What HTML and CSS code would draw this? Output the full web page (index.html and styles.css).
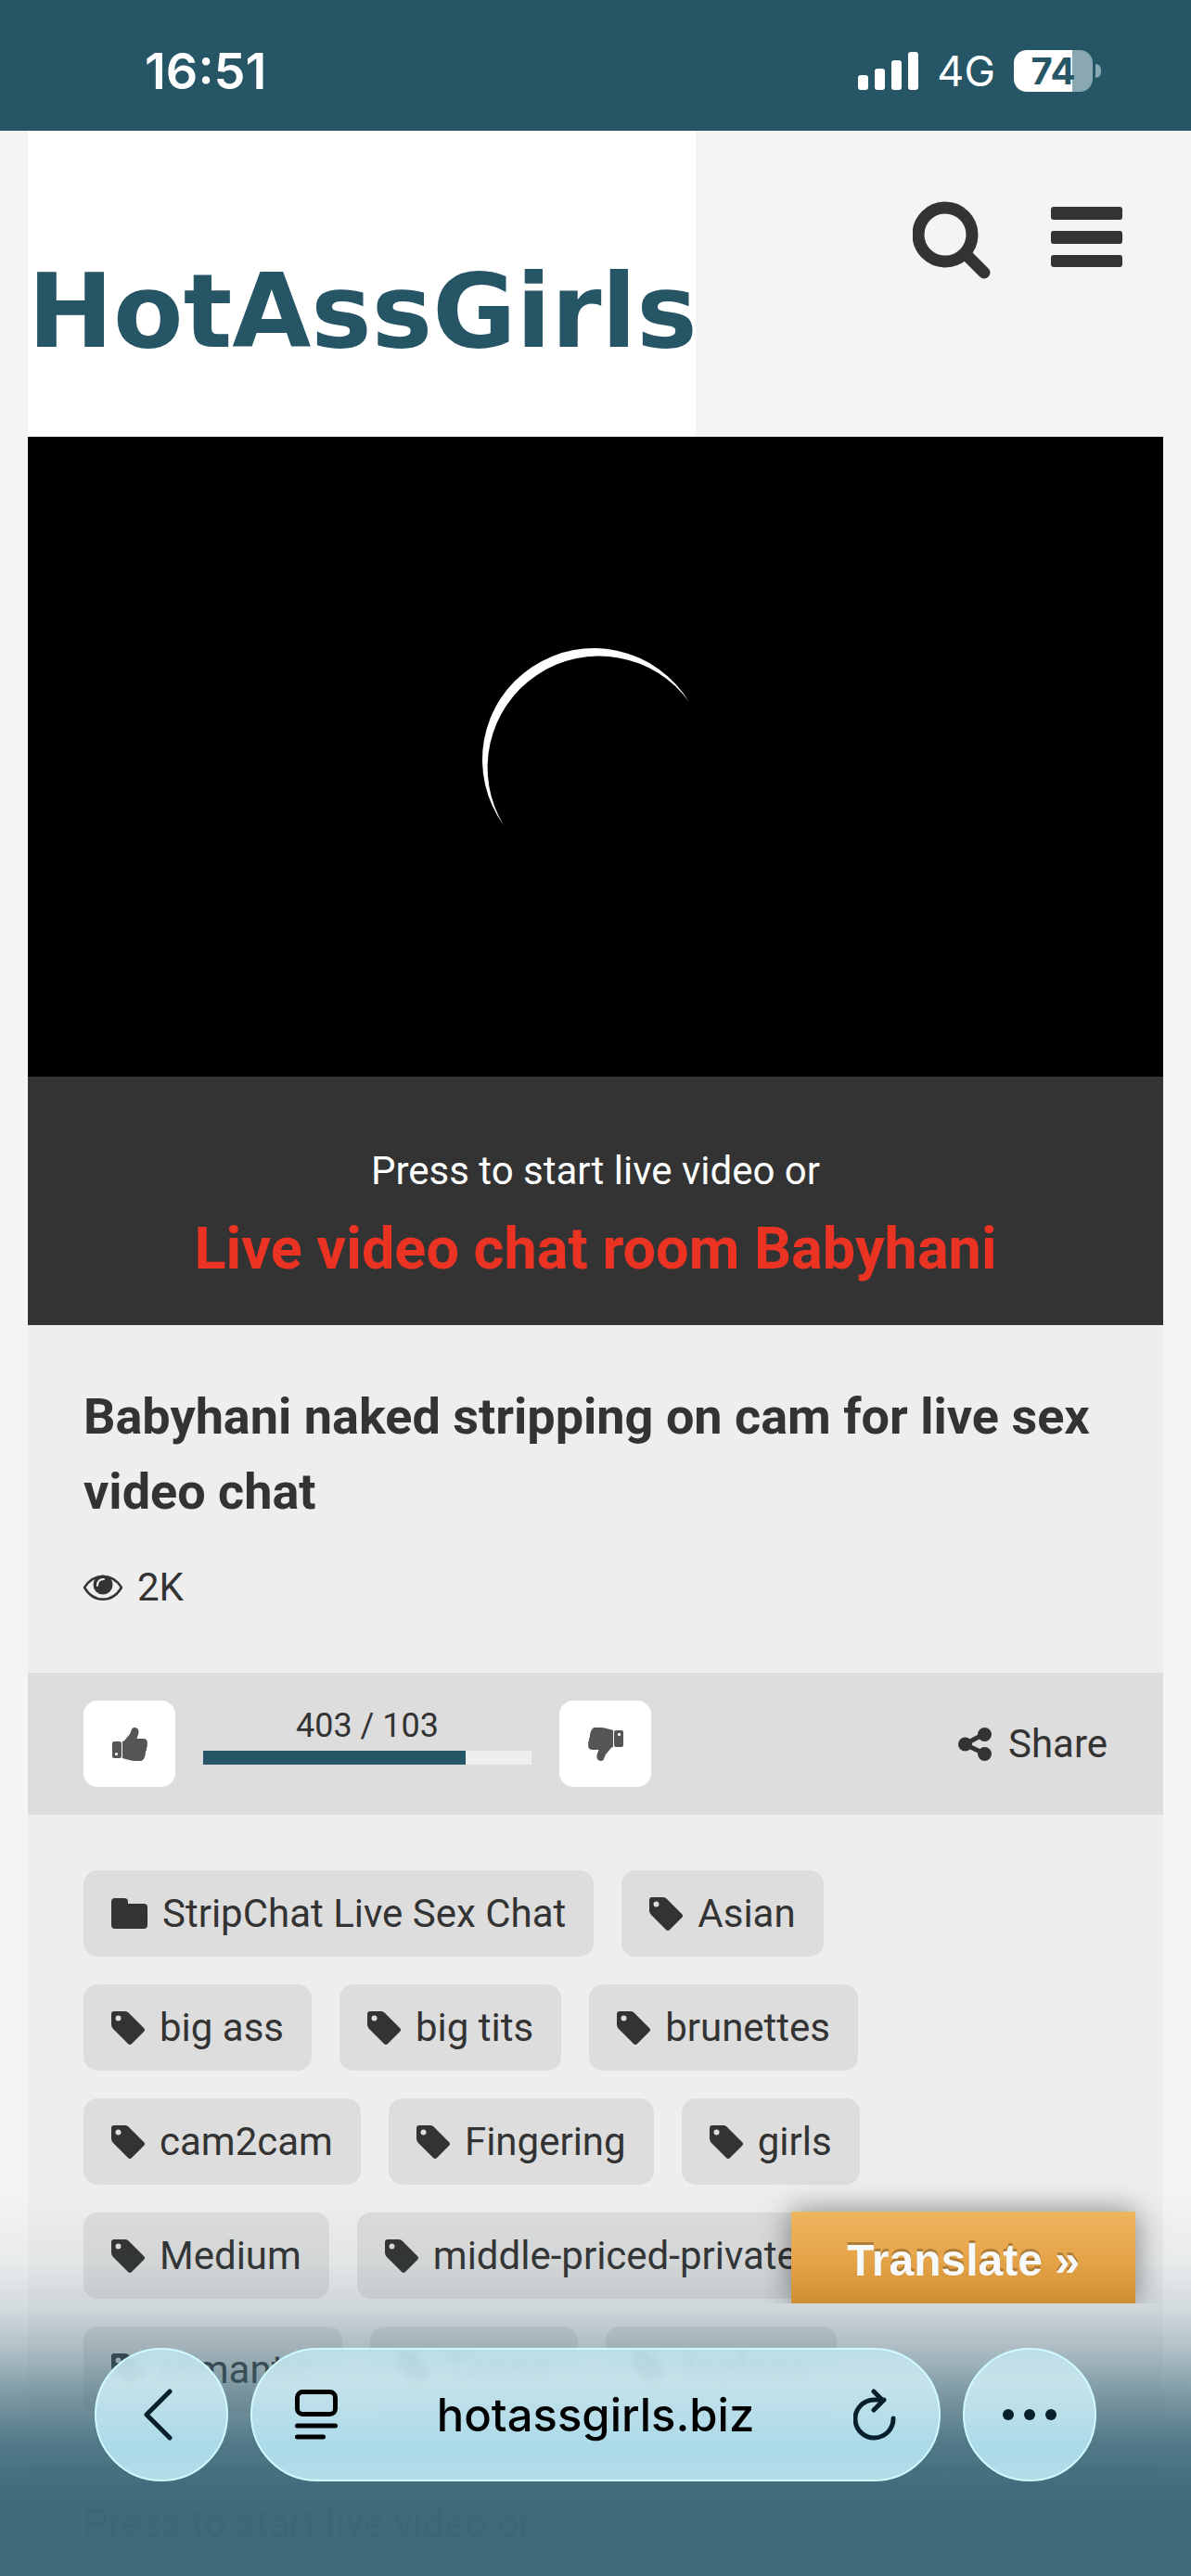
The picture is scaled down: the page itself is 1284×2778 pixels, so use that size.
FILE: index.html
```html
<!DOCTYPE html>
<html lang="en">
<head>
  <meta charset="UTF-8" />
  <meta name="viewport" content="width=device-width, initial-scale=1" />
  <title>Babyhani - HotAssGirls</title>
  <link rel="stylesheet" href="styles.css">
</head>
<body>
  <svg class="sprite" aria-hidden="true">
    <symbol id="tag" viewBox="0 0 36 36">
      <path fill-rule="evenodd" d="M3 0h12c2 0 3 1 4 2l16 16c1.400 1.400 1.400 3 0 4L22 35c-1 1.300-3 1.300-4 0L2 19c-1-1-2-3-2-5V3c0-2 1-3 3-3zM7.500 4.500a3 3 0 1 0 0 6 3 3 0 0 0 0-6z"/>
    </symbol>
    <symbol id="thumb" viewBox="0 0 38 36">
      <path fill-rule="evenodd" d="M2 15h6q2 0 2 2v14q0 2-2 2H2q-2 0-2-2V17q0-2 2-2zM4.500 27a1.600 1.600 0 1 0 0 3.200 1.600 1.600 0 0 0 0-3.200z"/>
      <path d="M11 15q2 0 3-2l5-6q1-2 2-5c1-3 7-3 7.500 2 .3 3-1 5-2 8h7c4 0 5 3 4 6q1 2-.5 4 .5 2-1 4c0 3-1 9-5 10-7 1-13-1-20-3z"/>
    </symbol>
  </svg>

  <div class="status-bar">
    <span class="time">16:51</span>
    <div class="status-icons">
      <svg width="65" height="41" viewBox="0 0 65 41" fill="#fff">
        <rect x="0" y="25" width="11" height="16" rx="3"/>
        <rect x="18" y="18" width="11" height="23" rx="3"/>
        <rect x="36" y="9" width="11" height="32" rx="3"/>
        <rect x="54" y="0" width="11" height="41" rx="3"/>
      </svg>
      <span class="network">4G</span>
      <div class="battery"><span>74</span></div>
    </div>
  </div>

  <header class="header">
    <a class="logo" href="#">HotAssGirls</a>
    <div class="header-buttons">
      <button aria-label="Search">
        <svg width="84" height="84" viewBox="0 0 84 84" fill="none" stroke="#333">
          <circle cx="35" cy="36" r="29" stroke-width="13"/>
          <path d="M58 58L77 77" stroke-width="13" stroke-linecap="round"/>
        </svg>
      </button>
      <button aria-label="Menu">
        <svg width="77" height="84" viewBox="0 0 77 84" fill="#333">
          <rect y="6" width="77" height="14" rx="3"/>
          <rect y="32" width="77" height="14" rx="3"/>
          <rect y="58" width="77" height="13" rx="3"/>
        </svg>
      </button>
    </div>
  </header>

  <main class="content">
    <div class="player">
      <svg class="spinner" viewBox="522 696 240 240" fill="#fff">
        <path d="M543 890A120.200 120.200 0 1 1 743 757A120.200 120.200 0 0 0 543 890z"/>
      </svg>
    </div>
    <div class="caption">
      <p>Press to start live video or</p>
      <a href="#">Live video chat room Babyhani</a>
    </div>

    <div class="info">
      <h1>Babyhani naked stripping on cam for live sex video chat</h1>
      <div class="views">
        <svg width="42" height="28" viewBox="0 0 42 28">
          <path d="M1 14C11-2 31-2 41 14C31 31 11 31 1 14z" fill="none" stroke="#333" stroke-width="2.500"/>
          <circle cx="21" cy="11" r="10.500" fill="#333"/>
          <path d="M15 12q0-7 7-7" fill="none" stroke="#eee" stroke-width="2" stroke-linecap="round"/>
        </svg>
        2K
      </div>
    </div>

    <div class="rating">
      <button class="vote" aria-label="Like"><svg><use href="#thumb"/></svg></button>
      <div class="score">
        <span>403 / 103</span>
        <div class="score-bar"><div class="score-fill" style="width: 80%"></div></div>
      </div>
      <button class="vote down" aria-label="Dislike"><svg><use href="#thumb"/></svg></button>
      <a class="share" href="#">
        <svg width="36" height="36" viewBox="0 0 36 36" fill="#333">
          <path d="M7 18L28 7M7 18L28 28" stroke="#333" stroke-width="5"/>
          <circle cx="7.500" cy="18" r="7.500"/>
          <circle cx="28.500" cy="7.500" r="7.500"/>
          <circle cx="28.500" cy="28.500" r="7.500"/>
        </svg>
        Share
      </a>
    </div>

    <div class="tags">
      <a href="#">
        <svg class="folder" viewBox="0 0 39 34"><path d="M4 0h10q4 0 4 4v2h17q4 0 4 4v19q0 4-4 4H4q-4 0-4-4V4q0-4 4-4z"/></svg>
        StripChat Live Sex Chat
      </a>
      <a href="#"><svg><use href="#tag"/></svg>Asian</a>
      <a href="#"><svg><use href="#tag"/></svg>big ass</a>
      <a href="#"><svg><use href="#tag"/></svg>big tits</a>
      <a href="#"><svg><use href="#tag"/></svg>brunettes</a>
      <a href="#"><svg><use href="#tag"/></svg>cam2cam</a>
      <a href="#"><svg><use href="#tag"/></svg>Fingering</a>
      <a href="#"><svg><use href="#tag"/></svg>girls</a>
      <a href="#"><svg><use href="#tag"/></svg>Medium</a>
      <a href="#"><svg><use href="#tag"/></svg>middle-priced-privates</a>
      <a href="#"><svg><use href="#tag"/></svg>romantic</a>
      <a href="#"><svg><use href="#tag"/></svg>Teens</a>
      <a href="#"><svg><use href="#tag"/></svg>topless</a>
    </div>
    <p class="more">Press to start live video or</p>
  </main>

  <div class="fade"></div>
  <button class="translate">Translate »</button>

  <nav class="browser-bar">
    <button class="glass round" aria-label="Back">
      <svg width="38" height="56" viewBox="0 0 38 56"><path d="M28 3L3 28L28 53"/></svg>
    </button>
    <div class="glass address">
      <button aria-label="Page menu">
        <svg class="black" width="46" height="54" viewBox="0 0 46 54"><rect x="2.500" y="2.500" width="41" height="24" rx="6"/><path d="M2.500 39h41M2.500 51h28"/></svg>
      </button>
      <span>hotassgirls.biz</span>
      <button aria-label="Reload">
        <svg width="46" height="56" viewBox="0 0 46 56"><path d="M43 32A20.500 20.500 0 1 1 22 12H33M22 3L32 13L22 23"/></svg>
      </button>
    </div>
    <button class="glass round" aria-label="More">
      <svg class="dots" width="58" height="12" viewBox="0 0 58 12"><circle cx="6" cy="6" r="6"/><circle cx="29" cy="6" r="6"/><circle cx="52" cy="6" r="6"/></svg>
    </button>
  </nav>
</body>
</html>
```
FILE: styles.css
```css
* {
  box-sizing: border-box;
}

body {
  margin: 0;
  background: #f4f4f4;
  color: #333;
  font-family: Roboto, sans-serif;
  font-size: 42px;
  line-height: 63px;
}

html, body {
  height: 100%;
  overflow: hidden;
}

a {
  color: inherit;
  text-decoration: none;
}

p, h1 {
  margin: 0;
}

button {
  padding: 0;
  border: none;
  background: none;
  cursor: pointer;
}

svg {
  display: block;
  flex-shrink: 0;
}

.sprite {
  display: none;
}

/* Phone status bar */
.status-bar {
  display: flex;
  justify-content: space-between;
  align-items: center;
  height: 141px;
  padding: 12px 106px 0 156px;
  background: #265566;
  color: white;
  font-family: Inter, sans-serif;
}

.time {
  font-size: 54px;
  font-weight: 600;
}

.status-icons {
  display: flex;
  align-items: center;
}

.network {
  margin: 0 20px;
  font-size: 45px;
}

.battery {
  position: relative;
  width: 85px;
  height: 45px;
  border-radius: 14px;
  background: linear-gradient(to right, white 74%, #8aa8b1 74%);
  color: #265566;
  font-size: 40px;
  font-weight: 700;
  line-height: 45px;
  text-align: center;
}

.battery::after {
  content: "";
  position: absolute;
  top: 15px;
  right: -9px;
  width: 6px;
  height: 15px;
  border-radius: 0 6px 6px 0;
  background: #8aa8b1;
}

/* Header */
.header {
  display: flex;
  justify-content: space-between;
  height: 330px;
  padding: 0 74px 0 30px;
}

.logo {
  width: 720px;
  padding-top: 120px;
  background: white;
  color: #265566;
  font-family: "DejaVu Sans", sans-serif;
  font-size: 110px;
  font-weight: bold;
  line-height: 150px;
  text-align: center;
}

.header-buttons {
  display: flex;
  align-items: flex-start;
  gap: 65px;
  padding-top: 76px;
}

.content {
  margin: 0 30px;
  background: #eee;
}

.player {
  display: flex;
  justify-content: center;
  align-items: center;
  height: 690px;
  background: black;
}

.spinner {
  width: 240px;
  height: 240px;
  overflow: visible;
}

.caption {
  padding: 70px 30px 29px;
  background: #333;
  color: white;
  text-align: center;
}

.caption a {
  display: block;
  color: #eb3323;
  font-size: 63px;
  font-weight: bold;
  line-height: 106px;
}

.info {
  padding: 58px 60px 61px;
}

h1 {
  font-size: 54px;
  line-height: 81px;
}

.views {
  display: flex;
  align-items: center;
  gap: 16px;
  margin-top: 31px;
}

/* Votes and share */
.rating {
  display: flex;
  align-items: center;
  gap: 30px;
  padding: 30px 60px;
  background: #ddd;
}

.vote {
  display: flex;
  justify-content: center;
  align-items: center;
  width: 99px;
  height: 93px;
  border-radius: 15px;
  background: white;
}

.vote svg {
  width: 38px;
  height: 36px;
  fill: #555;
}

.down svg {
  transform: rotate(180deg);
}

.score {
  width: 354px;
  padding-bottom: 24px;
  font-size: 36px;
  line-height: 54px;
  text-align: center;
}

.score span {
  display: block;
}

.score-bar {
  height: 15px;
  background: #eee;
}

.score-fill {
  height: 100%;
  background: #265566;
}

.share {
  display: flex;
  align-items: center;
  gap: 18px;
  margin-left: auto;
}

/* Tags */
.tags {
  display: flex;
  flex-wrap: wrap;
  gap: 30px;
  padding: 60px 120px 60px 60px;
}

.tags a {
  display: flex;
  align-items: center;
  gap: 16px;
  padding: 15px 30px;
  border-radius: 15px;
  background: #ddd;
}

.tags svg {
  width: 36px;
  height: 36px;
  fill: #333;
}

.tags .folder {
  width: 39px;
  height: 34px;
}

.more {
  padding: 28px 60px;
}

/* Things that float over the page */
.fade {
  position: fixed;
  right: 0;
  bottom: 0;
  left: 0;
  height: 418px;
  background: linear-gradient(
    rgba(60, 104, 120, 0),
    rgba(60, 104, 120, 0.06) 80px,
    rgba(60, 104, 120, 0.18) 130px,
    rgba(60, 104, 120, 0.38) 175px,
    rgba(60, 104, 120, 0.66) 225px,
    rgba(60, 104, 120, 0.88) 275px,
    rgba(60, 104, 120, 0.97) 320px,
    rgba(60, 104, 120, 0.99) 350px
  );
}

.translate {
  position: fixed;
  right: 60px;
  bottom: 294px;
  width: 371px;
  height: 99px;
  padding-top: 6px;
  background: linear-gradient(#eeb55f, #e5a347 55%, #ce8e32);
  box-shadow: 0 0 30px rgba(0, 0, 0, 0.45);
  clip-path: inset(-60px -60px 0 -60px);
  color: #f8f9fa;
  font-family: "Liberation Sans", sans-serif;
  font-size: 48px;
  font-weight: bold;
  text-shadow: 0 -3px 0 rgba(0, 0, 0, 0.25);
}

.browser-bar {
  position: fixed;
  right: 102px;
  bottom: 102px;
  left: 102px;
  display: flex;
  gap: 24px;
}

.glass {
  display: flex;
  align-items: center;
  height: 144px;
  border: 2px solid #cffaff;
  border-radius: 72px;
  background: linear-gradient(rgba(190, 225, 235, 0.9), rgba(203, 232, 239, 0.93) 25%, rgba(174, 220, 235, 0.98) 75%, rgba(181, 223, 235, 0.98));
  backdrop-filter: blur(3px);
}

.glass svg {
  fill: none;
  stroke: #08202b;
  stroke-width: 5;
  stroke-linecap: round;
  stroke-linejoin: round;
}

.glass .black {
  stroke: black;
}

.glass .dots {
  fill: #08202b;
  stroke: none;
}

.round {
  justify-content: center;
  width: 144px;
}

.address {
  flex: 1;
  justify-content: space-between;
  padding: 0 46px;
  color: black;
  font-family: Inter, sans-serif;
  font-size: 49px;
  font-weight: 500;
}
```
